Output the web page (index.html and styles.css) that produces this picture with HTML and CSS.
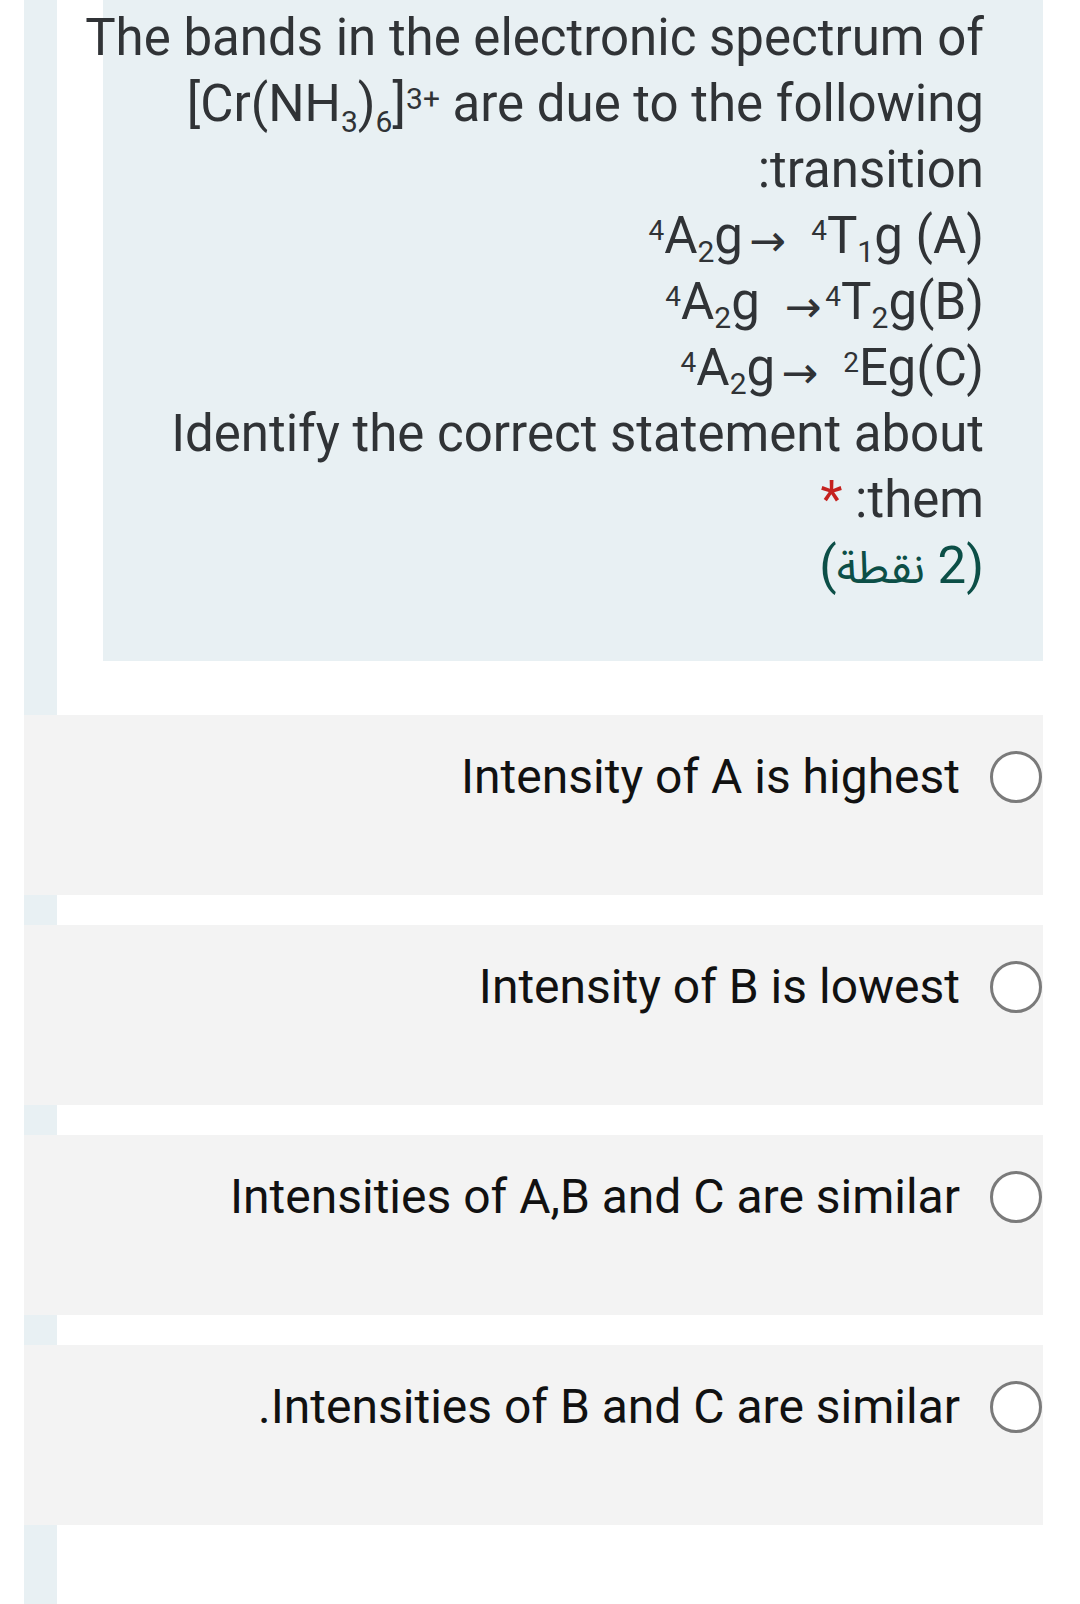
FILE: index.html
```html
<!DOCTYPE html>
<html lang="en">
<head>
<meta charset="utf-8">
<title>Question</title>
<link rel="stylesheet" href="styles.css">
</head>
<body>
<div class="page">
  <div class="question">
    <div class="line"><span>The bands in the electronic spectrum of</span></div>
    <div class="line"><span>[Cr(NH<span class="sub2">3</span>)<span class="sub2">6</span>]<span class="sup2">3+</span> are due to the following</span></div>
    <div class="line"><span>:transition</span></div>
    <div class="line"><span><span class="sup">4</span>A<span class="sub">2</span>g<span class="arrow">→</span> &nbsp;<span class="sup">4</span>T<span class="sub">1</span>g (A)</span></div>
    <div class="line"><span><span class="sup">4</span>A<span class="sub">2</span>g <span class="arrow tight">→</span><span class="sup">4</span>T<span class="sub">2</span>g(B)</span></div>
    <div class="line"><span><span class="sup">4</span>A<span class="sub">2</span>g<span class="arrow">→</span> &nbsp;<span class="sup">2</span>Eg(C)</span></div>
    <div class="line"><span>Identify the correct statement about</span></div>
    <div class="line"><span><span class="req">*</span> :them</span></div>
    <div class="line points"><span dir="rtl">(2 <span class="ar">نقطة</span>)</span></div>
  </div>

  <div class="options">
    <div class="option"><span class="opt-text">Intensity of A is highest</span><span class="radio"></span></div>
    <div class="option"><span class="opt-text">Intensity of B is lowest</span><span class="radio"></span></div>
    <div class="option"><span class="opt-text">Intensities of A,B and C are similar</span><span class="radio"></span></div>
    <div class="option"><span class="opt-text">.Intensities of B and C are similar</span><span class="radio"></span></div>
  </div>
</div>
</body>
</html>
```

FILE: styles.css
```css
html, body {
  margin: 0;
  padding: 0;
  background: #ffffff;
}

body {
  font-family: Roboto, "DejaVu Sans", sans-serif;
  width: 1080px;
  height: 1604px;
  overflow: hidden;
}

.page {
  margin-left: 24px;
  width: 1019px;
  height: 1604px;
  background: linear-gradient(to right, #e8f0f3 0, #e8f0f3 33px, #ffffff 33px);
}

.question {
  margin-left: 79px;
  background: #e8f0f3;
  padding: 5px 59px 62px 0;
  color: #303336;
  font-size: 51px;
  line-height: 66px;
}

.line {
  display: flex;
  justify-content: flex-end;
  white-space: nowrap;
  height: 66px;
}

.sub {
  font-size: 30px;
  line-height: 0;
  vertical-align: -9px;
}

.sup {
  font-size: 28px;
  line-height: 0;
  vertical-align: 13px;
}

.sub2 {
  font-size: 30px;
  line-height: 0;
  vertical-align: -11px;
}

.sup2 {
  font-size: 30px;
  line-height: 0;
  vertical-align: 12px;
}

.arrow {
  font-family: "DejaVu Sans", sans-serif;
  font-size: 44px;
  line-height: 0;
  vertical-align: -3px;
  padding-left: 6px;
}

.arrow.tight {
  padding-left: 12px;
  padding-right: 4px;
}

.req {
  color: #c5221f;
}

.points {
  color: #0c4f47;
}

.ar {
  font-family: "Noto Sans Arabic", "Noto Naskh Arabic", "DejaVu Sans", sans-serif;
  font-size: 45px;
}

.options {
  margin-top: 54px;
  display: flex;
  flex-direction: column;
  gap: 30px;
}

.option {
  height: 180px;
  box-sizing: border-box;
  background: #f3f3f3;
  padding: 36px 1px 0 0;
  display: flex;
  justify-content: flex-end;
  align-items: flex-start;
  gap: 30px;
}

.opt-text {
  font-size: 48px;
  line-height: 52px;
  color: #111111;
  white-space: nowrap;
}

.radio {
  width: 52px;
  height: 52px;
  box-sizing: border-box;
  border: 3px solid #7a7a7a;
  border-radius: 50%;
  background: #ffffff;
  flex: none;
}
```
